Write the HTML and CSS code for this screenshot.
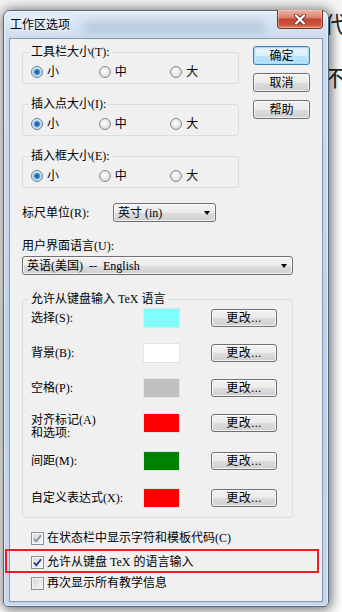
FILE: index.html
```html
<!DOCTYPE html>
<html lang="zh-CN">
<head>
    <meta charset="UTF-8">
    <meta name="viewport" content="width=device-width, initial-scale=1.0">
    <title>工作区选项</title>
    <link rel="stylesheet" href="styles.css">
</head>
<body>
    <div class="behind">
        <span class="bg-char char-top">代</span>
        <span class="bg-char char-mid">不</span>
    </div>

    <div class="window">
        <div class="titlebar">
            <span class="title">工作区选项</span>
            <span class="glass-blur"></span>
            <span class="close">
                <svg width="14" height="11" viewBox="0 0 14 11">
                    <path d="M3 1.5 L11 9.5 M11 1.5 L3 9.5" stroke="#6a2b22" stroke-width="4" stroke-linecap="round"/>
                    <path d="M3 1.5 L11 9.5 M11 1.5 L3 9.5" stroke="#fff" stroke-width="2.4" stroke-linecap="round"/>
                </svg>
            </span>
        </div>

        <div class="client">
            <div class="top">
                <div class="groups">
                    <fieldset class="size">
                        <legend>工具栏大小(T):</legend>
                        <div class="radios">
                            <label class="radio"><span class="dot on"></span>小</label>
                            <label class="radio"><span class="dot"></span>中</label>
                            <label class="radio"><span class="dot"></span>大</label>
                        </div>
                    </fieldset>
                    <fieldset class="size">
                        <legend>插入点大小(I):</legend>
                        <div class="radios">
                            <label class="radio"><span class="dot on"></span>小</label>
                            <label class="radio"><span class="dot"></span>中</label>
                            <label class="radio"><span class="dot"></span>大</label>
                        </div>
                    </fieldset>
                    <fieldset class="size">
                        <legend>插入框大小(E):</legend>
                        <div class="radios">
                            <label class="radio"><span class="dot on"></span>小</label>
                            <label class="radio"><span class="dot"></span>中</label>
                            <label class="radio"><span class="dot"></span>大</label>
                        </div>
                    </fieldset>
                </div>
                <div class="side">
                    <button class="btn default">确定</button>
                    <button class="btn">取消</button>
                    <button class="btn">帮助</button>
                </div>
            </div>

            <div class="ruler">
                <span class="ruler-label">标尺单位(R):</span>
                <div class="select unit"><span>英寸 (in)</span><span class="arrow"></span></div>
            </div>

            <div class="lang-label">用户界面语言(U):</div>
            <div class="select lang"><span>英语(美国)  --  English</span><span class="arrow"></span></div>

            <fieldset class="tex">
                <legend>允许从键盘输入 TeX 语言</legend>
                <div class="row">
                    <span class="name">选择(S):</span>
                    <span class="swatch cyan"></span>
                    <button class="btn change">更改...</button>
                </div>
                <div class="row">
                    <span class="name">背景(B):</span>
                    <span class="swatch white"></span>
                    <button class="btn change">更改...</button>
                </div>
                <div class="row">
                    <span class="name">空格(P):</span>
                    <span class="swatch gray"></span>
                    <button class="btn change">更改...</button>
                </div>
                <div class="row tall">
                    <span class="name two-line">对齐标记(A)<br>和选项:</span>
                    <span class="swatch red"></span>
                    <button class="btn change">更改...</button>
                </div>
                <div class="row">
                    <span class="name">间距(M):</span>
                    <span class="swatch green"></span>
                    <button class="btn change">更改...</button>
                </div>
                <div class="row last">
                    <span class="name">自定义表达式(X):</span>
                    <span class="swatch red"></span>
                    <button class="btn change">更改...</button>
                </div>
            </fieldset>

            <div class="checks">
                <label class="chk">
                    <span class="box">
                        <svg width="11" height="11" viewBox="0 0 11 11"><path d="M2 5.5 L4.3 8.3 L9 2.2" fill="none" stroke="#8592a6" stroke-width="1.8"/></svg>
                    </span>
                    在状态栏中显示字符和模板代码(C)
                </label>
                <label class="chk second">
                    <span class="box">
                        <svg width="11" height="11" viewBox="0 0 11 11"><path d="M2 5.5 L4.3 8.3 L9 2.2" fill="none" stroke="#1f3f8c" stroke-width="1.8"/></svg>
                    </span>
                    允许从键盘 TeX 的语言输入
                </label>
                <label class="chk third">
                    <span class="box"></span>
                    再次显示所有教学信息
                </label>
            </div>
        </div>
    </div>

    <div class="highlight"></div>
</body>
</html>
```

FILE: styles.css
```css
* {
    box-sizing: border-box;
}

body {
    margin: 0;
    width: 342px;
    height: 612px;
    overflow: hidden;
    position: relative;
    background: linear-gradient(#f4f4f4, #ffffff 30px);
    font-family: "Liberation Serif", "Noto Sans CJK SC", sans-serif;
    font-size: 12px;
    line-height: 14px;
    color: #000;
}

/* page text behind the dialog */
.behind {
    position: absolute;
    top: 0;
    left: 0;
    width: 342px;
    height: 612px;
}

.bg-char {
    position: absolute;
    left: 324px;
    font-family: "Noto Sans CJK SC", sans-serif;
    font-size: 22px;
    line-height: 24px;
    color: #222;
}

.char-top {
    top: 10px;
}

.char-mid {
    top: 64px;
}

.window {
    position: relative;
    z-index: 1;
    margin: 10px 0 0 3px;
    width: 326px;
    height: 597px;
    padding: 0 5px 4px;
    border: 1px solid #56657a;
    border-radius: 7px 7px 5px 5px;
    background: linear-gradient(#e2ecf7, #c9dbef 30px, #bcd2ea 60%, #c3d7ed);
    box-shadow: 1px 1px 12px 2px rgba(0, 0, 0, 0.55), inset 0 0 0 1px rgba(255, 255, 255, 0.55);
}

.titlebar {
    height: 27px;
    display: flex;
    align-items: flex-start;
}

.title {
    margin: 7px 0 0 1px;
    text-shadow: 0 0 4px #fff, 0 0 8px #fff;
}

.glass-blur {
    flex: 1;
    height: 14px;
    margin: 9px 12px 0 14px;
    background: rgba(80, 100, 130, 0.18);
    filter: blur(4px);
}

.close {
    width: 46px;
    height: 19px;
    margin-top: -1px;
    display: flex;
    align-items: center;
    justify-content: center;
    border: 1px solid #7a3226;
    border-top: none;
    border-radius: 0 0 4px 4px;
    background: linear-gradient(#eab0a2, #db8a74 40%, #c6472f 52%, #c9503a 80%, #e0866a);
    box-shadow: inset 0 0 0 1px rgba(255, 210, 200, 0.45);
}

.client {
    height: 564px;
    padding: 6px 12px 0 12px;
    border: 1px solid #8497ad;
    background: #f0f0f0;
}

.top {
    display: flex;
    gap: 14px;
}

.groups {
    width: 217px;
}

fieldset {
    margin: 0;
    min-width: 0;
    border: 1px solid #d5dfe5;
    border-radius: 3px;
}

legend {
    padding: 0 2px;
    margin-left: -2px;
    line-height: 14px;
}

.size {
    padding: 6px 0 4px 8px;
}

.size + .size {
    margin-top: 13px;
}

.radios {
    display: flex;
    height: 14px;
}

.radio {
    display: flex;
    align-items: center;
    gap: 4px;
    width: 69px;
}

.radio:nth-child(2) {
    width: 73px;
}

.dot {
    width: 12px;
    height: 12px;
    border-radius: 50%;
    border: 1px solid #8a8a8a;
    background: radial-gradient(circle at 45% 40%, #ffffff, #e2e2e2 60%, #cfcfcf);
}

.dot.on {
    border-color: #5c7fa3;
    background:
        radial-gradient(circle at 50% 50%, #14508f 0, #2a7ac8 2px, #7ec3ee 3.3px, rgba(255, 255, 255, 0) 4px),
        radial-gradient(circle at 45% 40%, #ffffff, #e2e2e2 60%, #cfcfcf);
}

.side {
    display: flex;
    flex-direction: column;
    gap: 8px;
    margin-top: 1px;
}

.btn {
    font-family: inherit;
    font-size: 12px;
    line-height: 14px;
    color: #000;
    padding: 0;
    border: 1px solid #707070;
    border-radius: 3px;
    background: linear-gradient(#f2f2f2, #ebebeb 50%, #dddddd 51%, #cfcfcf);
    box-shadow: inset 0 0 0 1px rgba(255, 255, 255, 0.7);
}

.side .btn {
    width: 57px;
    height: 19px;
}

.btn.default {
    border-color: #3c7fb1;
    box-shadow: inset 0 0 0 1px #a6dbf7, inset 0 0 0 2px rgba(200, 235, 252, 0.6);
    background: linear-gradient(#eaf6fd, #d9f0fc 50%, #bee6fd 51%, #a7d9f5);
}

.ruler {
    display: flex;
    align-items: center;
    margin-top: 15px;
}

.ruler-label {
    width: 91px;
}

.select {
    height: 19px;
    display: flex;
    align-items: center;
    justify-content: space-between;
    padding: 0 5px 0 4px;
    white-space: pre;
    border: 1px solid #707070;
    border-radius: 3px;
    background: linear-gradient(#f2f2f2, #ebebeb 50%, #dddddd 51%, #cfcfcf);
    box-shadow: inset 0 0 0 1px rgba(255, 255, 255, 0.7);
}

.select.unit {
    width: 103px;
}

.select.lang {
    width: 271px;
    margin-top: 3px;
}

.arrow {
    width: 0;
    height: 0;
    border-left: 3.5px solid transparent;
    border-right: 3.5px solid transparent;
    border-top: 4px solid #000;
}

.lang-label {
    margin-top: 17px;
}

.tex {
    width: 271px;
    margin-top: 17px;
    padding: 2px 0 9px 8px;
}

.row {
    display: flex;
    align-items: center;
    height: 20px;
}

.row + .row {
    margin-top: 15px;
}

.row.last {
    margin-top: 17px;
}

.row.tall {
    height: 23px;
    align-items: flex-start;
}

.name {
    width: 112px;
    line-height: 20px;
}

.name.two-line {
    line-height: 13px;
    padding-top: 1px;
}

.swatch {
    width: 37px;
    height: 20px;
    border: 1px solid #e3e3e3;
}

.cyan { background: #80ffff; }
.white { background: #ffffff; }
.gray { background: #c0c0c0; }
.red { background: #ff0000; }
.green { background: #008000; }

.btn.change {
    width: 66px;
    height: 18px;
    margin-left: 31px;
    letter-spacing: 0.5px;
}

.row.tall .btn.change {
    margin-top: 1px;
}

.checks {
    margin-top: 13px;
    padding-left: 9px;
}

.chk {
    display: flex;
    align-items: center;
    gap: 3px;
    height: 14px;
}

.chk.second {
    margin-top: 10px;
}

.chk.third {
    margin-top: 7px;
}

.box {
    width: 13px;
    height: 13px;
    display: flex;
    align-items: center;
    justify-content: center;
    border: 1px solid #8e8f8f;
    background: linear-gradient(135deg, #d3d6db, #f7f7f7);
    box-shadow: inset 0 0 0 1px #f5f5f5;
}

/* red annotation frame drawn over the dialog */
.highlight {
    position: absolute;
    z-index: 2;
    left: 5px;
    top: 549px;
    width: 314px;
    height: 24px;
    border: 2px solid #ee1c24;
}
```
